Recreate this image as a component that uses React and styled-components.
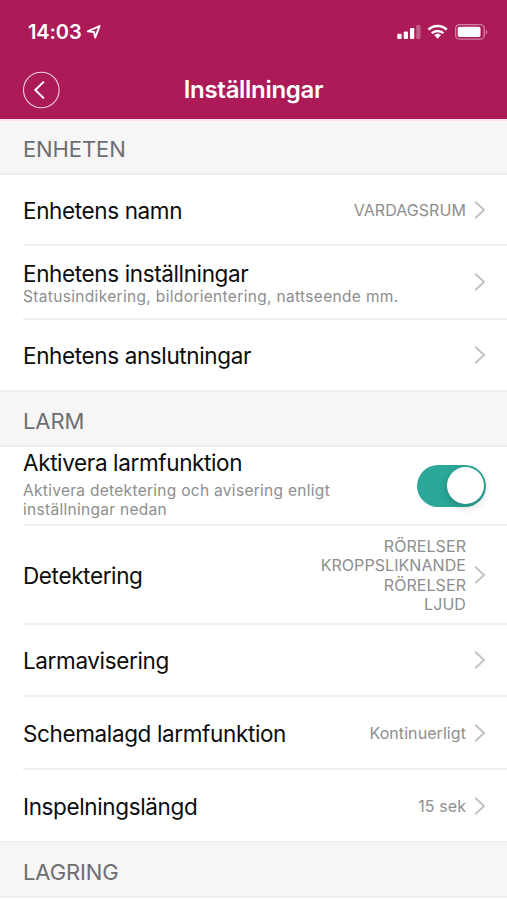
import React from "react";
import styled, { createGlobalStyle } from "styled-components";

const App = () => {
    return (
        <Screen>
            <GlobalStyle />
            <Header>
                <StatusBar>
                    <Clock>14:03</Clock>
                    <LocationIcon />
                    <StatusIcons />
                </StatusBar>
                <NavBar>
                    <BackButton aria-label="Tillbaka">
                        <svg width="38" height="38" viewBox="0 0 38 38" fill="none" stroke="#fff">
                            <circle cx="19.3" cy="19" r="17.8" strokeWidth="1.1" strokeOpacity="0.8" />
                            <path d="M21.9 10.6 L13.3 19 L21.9 27.4" strokeWidth="2" />
                        </svg>
                    </BackButton>
                    <Title>Inställningar</Title>
                </NavBar>
            </Header>

            <SectionTitle $height={54}>ENHETEN</SectionTitle>
            <SettingRow height={71} label="Enhetens namn" value="VARDAGSRUM" />
            <SettingRow
                height={74}
                label="Enhetens inställningar"
                note="Statusindikering, bildorientering, nattseende mm."
            />
            <SettingRow height={72} label="Enhetens anslutningar" last />

            <SectionTitle $height={55}>LARM</SectionTitle>
            <Row $height={79}>
                <Texts>
                    <Label>Aktivera larmfunktion</Label>
                    <Note $loose>
                        Aktivera detektering och avisering enligt
                        <br />
                        inställningar nedan
                    </Note>
                </Texts>
                <Switch role="switch" aria-checked="true">
                    <Knob />
                </Switch>
            </Row>
            <SettingRow
                height={99}
                label="Detektering"
                value={"RÖRELSER\nKROPPSLIKNANDE\nRÖRELSER\nLJUD"}
            />
            <SettingRow height={72} label="Larmavisering" />
            <SettingRow height={73} label="Schemalagd larmfunktion" value="Kontinuerligt" />
            <SettingRow height={73} label="Inspelningslängd" value="15 sek" last />

            <SectionTitle $height={55}>LAGRING</SectionTitle>
        </Screen>
    )
}

const SettingRow = ({ height, label, note, value, last }) => (
    <Row $height={height} $last={last}>
        <Texts $shift>
            <Label>{label}</Label>
            {note && <Note>{note}</Note>}
        </Texts>
        {value && <Value>{value}</Value>}
        <Chevron />
    </Row>
)

const Chevron = () => (
    <ChevronSvg width="12" height="20" viewBox="0 0 12 20" fill="none" stroke="#c3c3c3" strokeWidth="2">
        <path d="M1.2 1.8 L10 10 L1.2 18.2" />
    </ChevronSvg>
)

const LocationIcon = () => (
    <LocationSvg width="16" height="16" viewBox="0 0 16 16" fill="none" stroke="#fff" strokeWidth="1.9" strokeLinejoin="round">
        <path d="M13.6 2 L1.8 7.4 L8 8 L9.2 13.6 Z" />
    </LocationSvg>
)

const StatusIcons = () => (
    <svg width="92" height="18" viewBox="0 0 92 18">
        <g fill="#fff">
            <rect x="1.3" y="10.7" width="4.3" height="5.3" rx="1" />
            <rect x="7.7" y="8.5" width="4.3" height="7.5" rx="1" />
            <rect x="14" y="5" width="4.3" height="11" rx="1" />
            <rect x="20.2" y="2" width="4.3" height="14" rx="1" opacity="0.3" />
            <path d="M38.2 12 a5 5 0 0 1 6.8 0 L41.6 15.7 Z" />
        </g>
        <g fill="none" stroke="#fff" strokeWidth="2.5">
            <path d="M32.4 6.6 a13.3 13.3 0 0 1 18.4 0" />
            <path d="M35.8 10.2 a8.4 8.4 0 0 1 11.6 0" />
        </g>
        <rect x="59.6" y="1.6" width="28.6" height="14.6" rx="4" fill="none" stroke="#fff" strokeOpacity="0.45" strokeWidth="1.3" />
        <rect x="61.7" y="3.8" width="22.8" height="10.2" rx="1.8" fill="#fff" />
        <path d="M89.8 6.4 q3 2.5 0 5 Z" fill="#fff" fillOpacity="0.5" />
    </svg>
)

export default App;

const GlobalStyle = createGlobalStyle`
    body {
        margin: 0;
        background: #fff;
        overflow: hidden;
    }
    * {
        box-sizing: border-box;
    }
`;
const Screen = styled.div`
    width: 507px;
    height: 900px;
    overflow: hidden;
    background: #fff;
    font-family: Inter, "Liberation Sans", sans-serif;
`;
const Header = styled.header`
    height: 121px;
    background: #ac1a57;
    border-bottom: 2px solid #fbe4ee;
    color: #fff;
`;
const StatusBar = styled.div`
    display: flex;
    align-items: center;
    height: 62px;
    padding: 2px 19px 0 28px;
`;
const Clock = styled.span`
    font-size: 20px;
    font-weight: 600;
    letter-spacing: -0.1px;
`;
const LocationSvg = styled.svg`
    margin: 0 auto 0 4px;
`;
const NavBar = styled.div`
    display: grid;
    grid-template-columns: 38px 1fr 38px;
    align-items: center;
    height: 56px;
    padding: 0 22px;
`;
const BackButton = styled.button`
    width: 38px;
    height: 38px;
    padding: 0;
    border: 0;
    background: none;

    svg {
        display: block;
    }
`;
const Title = styled.h1`
    margin: 0;
    padding-bottom: 1px;
    text-align: center;
    font-size: 24px;
    font-weight: 600;
    letter-spacing: -0.3px;
`;
const SectionTitle = styled.h2`
    display: flex;
    align-items: center;
    height: ${(p) => p.$height}px;
    margin: 0;
    padding: 4px 23px 0;
    background: #f6f6f6;
    border-bottom: 2px solid #eee;
    color: #6e6e71;
    font-size: 22px;
    font-weight: 400;
    letter-spacing: -0.1px;
`;
const Row = styled.div`
    display: flex;
    align-items: center;
    height: ${(p) => p.$height}px;
    margin-left: ${(p) => (p.$last ? 0 : 23)}px;
    padding-left: ${(p) => (p.$last ? 23 : 0)}px;
    padding-right: 21px;
    border-bottom: 2px solid #f0f0f0;
`;
const Texts = styled.div`
    display: flex;
    flex: 1;
    flex-direction: column;
    padding-top: ${(p) => (p.$shift ? 2 : 0)}px;
    padding-bottom: ${(p) => (p.$shift ? 0 : 2)}px;
    white-space: nowrap;
`;
const Label = styled.span`
    color: #0c0c0c;
    font-size: 22.5px;
    line-height: 26px;
    letter-spacing: -0.37px;
`;
const Note = styled.span`
    margin-top: ${(p) => (p.$loose ? 5 : 0)}px;
    color: #8e8e8e;
    font-size: 15.5px;
    line-height: 19px;
    letter-spacing: ${(p) => (p.$loose ? 0.29 : 0.33)}px;
`;
const Value = styled.span`
    padding-top: 2px;
    color: #8e8e8e;
    font-size: 16px;
    line-height: 19.3px;
    letter-spacing: 0.07px;
    text-align: right;
    white-space: pre-line;
`;
const ChevronSvg = styled.svg`
    flex: none;
    margin-left: 8px;
`;
const Switch = styled.div`
    display: flex;
    justify-content: flex-end;
    align-items: center;
    width: 69px;
    height: 42px;
    padding-right: 2px;
    border-radius: 21px;
    background: #2ba899;
`;
const Knob = styled.span`
    width: 37px;
    height: 37px;
    border-radius: 50%;
    background: #fff;
    box-shadow: 0 3px 8px rgba(0, 0, 0, 0.2);
`;
